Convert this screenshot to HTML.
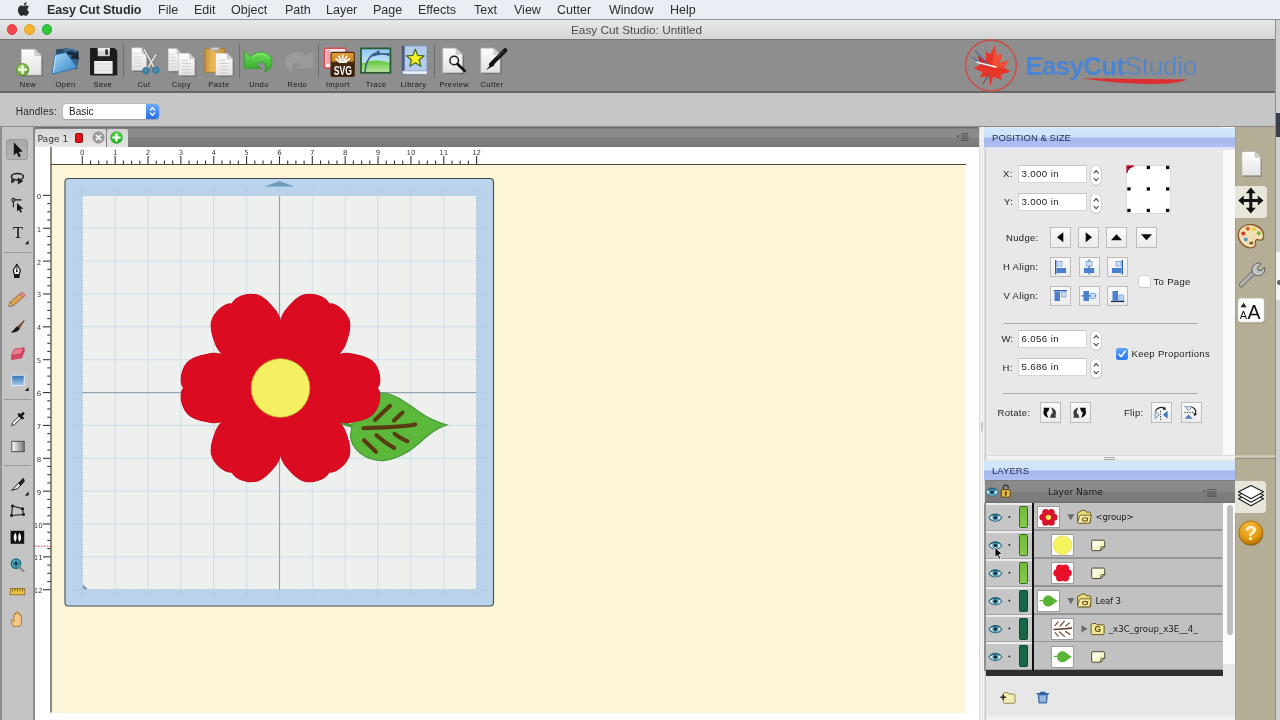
<!DOCTYPE html>
<html lang="en"><head><meta charset="utf-8"><title>Easy Cut Studio: Untitled</title>
<style>
*{box-sizing:border-box;margin:0;padding:0}
html,body{width:1280px;height:720px;overflow:hidden;background:#c9c9c9;font-family:"Liberation Sans","DejaVu Sans",sans-serif;color:#222}
div,span,svg{position:absolute}
svg{overflow:visible}
.dv{font-family:"DejaVu Sans","Liberation Sans",sans-serif}
#menubar{left:0;top:0;width:1280px;height:20px;background:#e9eef5;border-bottom:1px solid #8d939b;font-size:12.5px;color:#2b2d31}
#menubar span{top:1.800px;white-space:nowrap;line-height:17px}
#titlebar{left:0;top:20px;width:1275px;height:20px;background:linear-gradient(#e9e9e9,#d3d3d3);font-size:11.8px;color:#4a4a4a}
#toolbar{left:0;top:39px;width:1275px;height:54px;background:#8e8e8e;border-top:1px solid #757575;border-bottom:2px solid #666}
#optbar{left:0;top:93px;width:1275px;height:34px;background:#c6c6c6;border-bottom:1px solid #8a8a8a}
.tl{top:80.300px;font-size:7.500px;line-height:10px;color:#1a1a1a;text-align:center;width:50px;white-space:nowrap;letter-spacing:.42px}
.tsep{top:44px;width:1px;height:34px;background:#6e6e6e}
.pl{font-size:9.500px;line-height:14px;color:#202020;white-space:nowrap;letter-spacing:.32px}
.inp{width:69px;height:18.300px;background:#fff;border:1px solid #d6d6d6;border-top-color:#c4c4c4;font-size:9.700px;line-height:15.600px;color:#222;padding-left:2.300px;white-space:nowrap;letter-spacing:.38px}
.spin{width:10.400px;height:18.500px;border-radius:5.200px;background:#fff;box-shadow:0 0 0 .6px #c6c6c6,0 .6px 1.200px rgba(0,0,0,.25)}
.spin:before,.spin:after{content:"";position:absolute;left:3.500px;width:3.300px;height:3.300px;border:solid #3a3a3a;border-width:1.200px 0 0 1.200px}
.spin:before{top:5.200px;transform:rotate(45deg)}
.spin:after{top:9.800px;transform:rotate(225deg)}
.btn{width:21px;height:20.500px;background:linear-gradient(#fafafa,#ececec);border:1px solid #bdbdbd}
.lt{font-size:8.550px;line-height:12px;color:#1a1a1a;white-space:nowrap}
#app{left:0;top:0;width:1280px;height:720px;will-change:transform}

</style></head><body>
<div id="app">
<div id="menubar">
<svg style="left:18.200px;top:1.700px" width="12.100" height="14" viewBox="0 0 13 15"><path d="M9.2 0.2c.1 1-.3 1.8-.8 2.4-.6.7-1.400 1.100-2.200 1-.1-.9.300-1.800.8-2.300C7.600.6 8.500.2 9.200.2zM12 10.700c-.4.900-.6 1.300-1.100 2.100-.7 1.100-1.700 2.100-2.600 2.100-.9 0-1.100-.6-2.300-.6-1.200 0-1.500.6-2.300.6-1 0-1.800-1-2.500-2.100C-.300 10.500-.5 7.200.700 5.500c.8-1.200 2-1.800 3-1.800 1.100 0 1.800.6 2.700.6.900 0 1.400-.6 2.700-.6.900 0 2 .5 2.700 1.400-2.300 1.300-2 4.700.2 5.600z" fill="#2b2d31"/></svg>
<span style="left:47px;font-weight:bold;letter-spacing:-.1px">Easy Cut Studio</span>
<span style="left:158px">File</span>
<span style="left:194px">Edit</span>
<span style="left:231px">Object</span>
<span style="left:285px">Path</span>
<span style="left:326px">Layer</span>
<span style="left:373px">Page</span>
<span style="left:418px">Effects</span>
<span style="left:474px">Text</span>
<span style="left:514px">View</span>
<span style="left:557px">Cutter</span>
<span style="left:609px">Window</span>
<span style="left:670px">Help</span>
</div>
<div id="titlebar">
<div style="left:6.800px;top:4.200px;width:10.400px;height:10.400px;border-radius:6px;background:#f5454a;border:.6px solid #dc3a40"></div>
<div style="left:24.300px;top:4.200px;width:10.400px;height:10.400px;border-radius:6px;background:#f7b42e;border:.6px solid #dc9e2a"></div>
<div style="left:41.800px;top:4.200px;width:10.400px;height:10.400px;border-radius:6px;background:#30c83c;border:.6px solid #28ac34"></div>
<span style="left:571px;top:2.500px;white-space:nowrap;line-height:14px">Easy Cut Studio: Untitled</span>
</div>
<div id="toolbar"></div>
<div id="optbar">
<span style="left:15.800px;top:12px;font-size:10px;line-height:14px;color:#2a2a2a;letter-spacing:.2px">Handles:</span>
<div style="left:63px;top:11px;width:96px;height:15px;background:#fff;border-radius:3.5px;box-shadow:0 0 0 .5px #b2b2b2,0 1px 1px rgba(0,0,0,.25)"></div>
<div style="left:146px;top:11px;width:13px;height:15px;background:linear-gradient(#6aa9f7,#2570e8);border-radius:0 3.5px 3.5px 0"></div>
<svg style="left:146px;top:11px" width="13" height="15" viewBox="0 0 13 15"><path d="M4.300 6.100L6.500 3.800 8.700 6.100M4.300 8.900L6.500 11.200 8.700 8.900" fill="none" stroke="#fff" stroke-width="1.300" stroke-linecap="round" stroke-linejoin="round"/></svg>
<span style="left:69px;top:12px;font-size:10px;line-height:14px;color:#222">Basic</span>
</div>
<!-- toolbar labels -->
<span class="tl" style="left:3px">New</span>
<span class="tl" style="left:40.500px">Open</span>
<span class="tl" style="left:77.800px">Save</span>
<span class="tl" style="left:119px">Cut</span>
<span class="tl" style="left:156.300px">Copy</span>
<span class="tl" style="left:193.900px">Paste</span>
<span class="tl" style="left:234px">Undo</span>
<span class="tl" style="left:272.400px">Redo</span>
<span class="tl" style="left:312.900px">Import</span>
<span class="tl" style="left:351.200px">Trace</span>
<span class="tl" style="left:388.400px">Library</span>
<span class="tl" style="left:429.300px">Preview</span>
<span class="tl" style="left:467px">Cutter</span>
<div class="tsep" style="left:123px"></div>
<div class="tsep" style="left:239px"></div>
<div class="tsep" style="left:318px"></div>
<div class="tsep" style="left:434px"></div>
<svg style="left:0;top:0" width="1280" height="100" viewBox="0 0 1280 100">
<defs>
<linearGradient id="pg1" x1="0" y1="0" x2="0" y2="1"><stop offset="0" stop-color="#fdfdfd"/><stop offset="1" stop-color="#e2e2e2"/></linearGradient>
<radialGradient id="gplus" cx=".4" cy=".35" r=".7"><stop offset="0" stop-color="#b6e07a"/><stop offset="1" stop-color="#5a9a2a"/></radialGradient>
<linearGradient id="fold" x1="0" y1="0" x2="1" y2="1"><stop offset="0" stop-color="#a6d8f6"/><stop offset="1" stop-color="#2f83c8"/></linearGradient>
<linearGradient id="clip" x1="0" y1="0" x2="1" y2="0"><stop offset="0" stop-color="#c99236"/><stop offset=".4" stop-color="#eab95a"/><stop offset="1" stop-color="#c58d33"/></linearGradient>
<linearGradient id="und" x1="0" y1="0" x2="0" y2="1"><stop offset="0" stop-color="#6ee05a"/><stop offset="1" stop-color="#2fa62a"/></linearGradient>
<linearGradient id="sky" x1="0" y1="0" x2="0" y2="1"><stop offset="0" stop-color="#8cc6ee"/><stop offset="1" stop-color="#eaf6fc"/></linearGradient>
<linearGradient id="hill" x1="0" y1="0" x2="0" y2="1"><stop offset="0" stop-color="#5cc83a"/><stop offset="1" stop-color="#bfe6a6"/></linearGradient>
<linearGradient id="svgb" x1="0" y1="0" x2="0" y2="1"><stop offset="0" stop-color="#e9a03a"/><stop offset=".36" stop-color="#c9801f"/><stop offset=".42" stop-color="#4a2c10"/><stop offset="1" stop-color="#2e1a0a"/></linearGradient>
<g id="page"><path d="M.8 .8H13L19 6.800V25H.8z" fill="#3a3a3a" opacity=".35" transform="translate(1 1)"/><path d="M0 0H12.500L18.500 6V24.500H0z" fill="url(#pg1)" stroke="#b9b9b9" stroke-width=".6"/><path d="M12.500 0V6H18.500z" fill="#d2d2d2" stroke="#b0b0b0" stroke-width=".5"/></g>
<g id="lines" stroke="#c9c9c9" stroke-width=".8"><path d="M2.500 5H9M2.500 8H12M2.500 11H12M2.500 14H12M2.500 17H12"/></g>
</defs>
<!-- New -->
<use href="#page" transform="translate(21.300 49.300) scale(1.080 1.050)"/>
<circle cx="22.600" cy="69.700" r="6.200" fill="url(#gplus)" stroke="#4a8a22" stroke-width=".7"/>
<path d="M22.600 66.200V73.200M19.100 69.700H26.100" stroke="#f4fbe8" stroke-width="2.300" stroke-linecap="round"/>
<!-- Open -->
<path d="M56 49.500L67 48.200 79 57.500 76.500 69.500 56.500 61z" fill="#2a4a6a"/>
<path d="M62.500 49.800C68 47.600 75.500 48.300 79 53L76 66.500 68.500 59.500z" fill="#3a6a9a"/>
<path d="M66 52.500C69.500 50.500 73.500 50.800 75.500 53L78.200 50 78.800 59.500 69.300 58.500 72.500 55.700C71 54.500 68.500 54.500 67 55.500z" fill="#1a2a3a"/>
<path d="M52 74.200L54.500 56.500C54.700 55.300 55.300 54.700 56.500 54.500L66 52.500 77.500 67.700z" fill="url(#fold)" stroke="#2a6aa8" stroke-width=".8" stroke-linejoin="round"/>
<path d="M53.300 73L55.500 57" stroke="#d6eefc" stroke-width="1" opacity=".8"/>
<!-- Save -->
<path d="M90 49.200C90 48.500 90.500 48 91.200 48H114.500L117.300 50.800V74.300C117.300 75 116.800 75.500 116.100 75.500H91.200C90.500 75.500 90 75 90 74.300z" fill="#1c1c1c"/>
<rect x="94.200" y="61" width="18.400" height="12.800" fill="#eeeeee"/><path d="M94.200 64H112.600M94.200 67H112.600M94.200 70H112.600" stroke="#cfcfcf" stroke-width=".7"/>
<rect x="97.800" y="48" width="12" height="8.200" fill="#cfcfcf"/><rect x="97.800" y="48" width="12" height="3" fill="#ededed"/><rect x="105.300" y="49.300" width="2.600" height="5.600" rx=".8" fill="#2a2a2a"/>
<!-- Cut -->
<use href="#page" transform="translate(131.800 47.800) scale(.8 .93)"/><use href="#lines" transform="translate(131.800 48.500) scale(.8 1.050)"/>
<path d="M144.300 49.500L154.300 68M156 54.500L147.500 68.500" stroke="#6a6a6a" stroke-width="2.900" stroke-linecap="round"/>
<path d="M144.300 49.500L154.300 68M156 54.500L147.500 68.500" stroke="#e4e4e4" stroke-width="1.600" stroke-linecap="round"/>
<circle cx="146" cy="70.800" r="2.500" fill="#5f93b4" stroke="#3f7ea6" stroke-width="2.400"/><circle cx="155.800" cy="70.300" r="2.500" fill="#5f93b4" stroke="#3f7ea6" stroke-width="2.400"/>
<!-- Copy -->
<use href="#page" transform="translate(168.200 48.600) scale(.7 .915)"/><use href="#lines" transform="translate(168.200 49) scale(.7 1.050)"/>
<use href="#page" transform="translate(178.600 53.200) scale(.875 .905)"/><use href="#lines" transform="translate(179.600 55) scale(.95 1.050)"/>
<!-- Paste -->
<rect x="204.800" y="48.600" width="20.200" height="23.800" rx="1.200" fill="url(#clip)" stroke="#9a6a22" stroke-width=".6"/>
<rect x="210.500" y="47.300" width="9" height="3.300" rx="1" fill="#c9c9c9" stroke="#8a8a8a" stroke-width=".5"/>
<use href="#page" transform="translate(215.600 53.200) scale(.925 .905)"/><use href="#lines" transform="translate(216.800 55) scale(1 1.050)"/>
<!-- Undo -->
<path d="M244.600 51.500L251 56.500C257.500 50 268 50.500 271.300 58C273.500 64 270 70.500 264.500 72C266.500 68 266 63 261.800 62.300C259 62 257 63.500 256.500 65.500L262 68.300H244.600z" fill="url(#und)" stroke="#2a9a26" stroke-width=".7" stroke-linejoin="round"/>
<path d="M252 57.300C257.500 52.500 266 53 269 58.500" fill="none" stroke="#a6f08a" stroke-width="1" opacity=".7"/>
<!-- Redo -->
<path d="M312.800 51.500L306.400 56.500C299.900 50 289.400 50.500 286.100 58C283.900 64 287.400 70.500 292.900 72C290.900 68 291.400 63 295.600 62.300C298.400 62 300.400 63.500 300.900 65.500L295.400 68.300H312.800z" fill="#9d9d9d" stroke="#989898" stroke-width=".6" opacity=".9"/>
<!-- Import -->
<rect x="324.500" y="48.200" width="21.500" height="19.800" rx="1.200" fill="#fbeaea" stroke="#d84a55" stroke-width="1.600"/>
<rect x="326.300" y="50" width="4" height="14" fill="#f4a0a6"/>
<rect x="331" y="52.400" width="23.300" height="24" rx="1.500" fill="url(#svgb)" stroke="#4a2a0c" stroke-width="1.100"/>
<g stroke="#fff" stroke-width="1.700" stroke-linecap="round"><path d="M342.700 55.300V60M338.800 56.300L340.800 60.300M346.600 56.300L344.600 60.300M336 59L339.200 61.300M349.400 59L346.200 61.300"/></g>
<path d="M338 63C340 60.300 345.400 60.300 347.400 63z" fill="#fff"/>
<text x="333.800" y="74.600" font-family="Liberation Sans, sans-serif" font-weight="bold" font-size="12.600" fill="#fff" textLength="18.200" lengthAdjust="spacingAndGlyphs">SVG</text>
<!-- Trace -->
<rect x="361" y="48.400" width="29.400" height="24.400" fill="url(#sky)"/>
<path d="M361 63.500C370 59.500 382 59.500 390.400 63V72.800H361z" fill="url(#hill)"/>
<rect x="361" y="48.400" width="29.400" height="24.400" fill="none" stroke="#2a5c36" stroke-width="1.800"/>
<path d="M365 72C365.500 62 370 53.500 378.500 52.500M372 56C378 53.500 384 53.500 389 54.500" fill="none" stroke="#3d5f84" stroke-width="1.600"/>
<rect x="376.800" y="50.800" width="3" height="3" fill="#3d5f84"/><rect x="386.800" y="53" width="2.800" height="2.800" fill="#3d5f84"/>
<!-- Library -->
<rect x="401.700" y="45.800" width="25.300" height="28.400" rx="1" fill="#b5cbea" stroke="#7089b2" stroke-width=".8"/>
<rect x="401.700" y="45.800" width="3" height="28.400" fill="#4a5c80"/>
<path d="M402.500 70.800H427V73.800H402.500z" fill="#eef2f8"/><path d="M402.500 70.800H427" stroke="#7d93b8" stroke-width=".7"/>
<path d="M415.300 49.300L417.700 55.400 424.200 55.800 419.200 60 420.800 66.300 415.300 62.800 409.800 66.300 411.400 60 406.400 55.800 412.900 55.400z" fill="#f6ee1e" stroke="#3f6a2a" stroke-width="1.200" stroke-linejoin="round"/>
<!-- Preview -->
<use href="#page" transform="translate(442.800 48.200) scale(1.060 1)"/>
<circle cx="454.200" cy="60.500" r="4.300" fill="#f2f2f2" stroke="#1e1e1e" stroke-width="1.500"/>
<path d="M457.500 64L464.600 70.800" stroke="#141414" stroke-width="2.700" stroke-linecap="round"/>
<!-- Cutter -->
<use href="#page" transform="translate(480.800 48.200) scale(1.040 1)"/>
<path d="M505.200 50.300L491 64.500" stroke="#141414" stroke-width="4.200" stroke-linecap="round"/>
<path d="M492.800 62.200L486 70 494.600 65.300z" fill="#141414"/>
<path d="M503.500 51L497 57.500" stroke="#555" stroke-width="1" stroke-linecap="round"/>
<!-- Logo -->
<circle cx="991" cy="65.500" r="25.400" fill="none" stroke="#c9504a" stroke-width="1.600"/>
<g transform="translate(992 66) rotate(8)">
<path d="M0 -21L3.500 -11 8.500 -13.500 7 -4 16 -8 12.500 0 19 3 10 7.500 11.500 12.500 2.500 10.500 1 21 -1.500 10.500 -10.500 13 -8.500 7.500 -18 4.500 -11.500 0 -15.500 -8 -6.500 -4.500 -8 -13.500 -3.500 -11z" fill="#e8352a"/>
<path d="M0 -21L3.500 -11 8.500 -13.500 7 -4 16 -8 12.500 0 0 2z" fill="#f25a3a" opacity=".7"/>
<path d="M0 2L-11.500 0 -15.500 -8 -6.500 -4.500z" fill="#c8201a" opacity=".7"/>
</g>
<path d="M972 57L986 66M975 50.500L990 66.500" stroke="#5a6a9a" stroke-width="1.100"/><path d="M977 62.200L996 67" stroke="#f4f4f4" stroke-width="1.400" stroke-linecap="round"/>
<path d="M983 84L989 74" stroke="#7a3a3a" stroke-width="1"/>
<path d="M1081.500 78.300L1187 79.400C1180 82.600 1165 84.300 1145 83.900C1122 83.400 1100 81.400 1081.500 78.300z" fill="#de2f30"/>
</svg>
<span style="left:1025.500px;top:50px;font-size:26px;line-height:32px;font-weight:bold;color:#4a84d2;letter-spacing:-.75px;white-space:nowrap">EasyCut</span>
<svg style="left:0;top:0" width="1280" height="100" viewBox="0 0 1280 100"><text x="1124.600" y="75.400" font-family="Liberation Sans, sans-serif" font-size="26" fill="#4a84d2" stroke="#8e8e8e" stroke-width=".55" letter-spacing="-.2">Studio</text></svg>


<!-- document area -->
<div id="tabbar" style="left:35px;top:127px;width:944px;height:20px;background:linear-gradient(#6f6f6f 0,#747474 1px,#8b8b8b 2px,#8b8b8b 10px,#808080 11px,#7b7b7b 19px,#6a6a6a 20px)"></div>
<div style="left:35px;top:129px;width:70.500px;height:18px;background:linear-gradient(#d6d6d6,#dedede 50%,#e6e6e6);border-radius:2px 2px 0 0"></div>
<div style="left:107px;top:129px;width:20.500px;height:18px;background:linear-gradient(#d2d2d2,#dcdcdc 50%,#e2e2e2);border-radius:2px 2px 0 0"></div>
<span class="dv" style="left:37.500px;top:131.500px;font-size:9.200px;line-height:13px;color:#383838;white-space:nowrap;letter-spacing:-.05px">Page 1</span>
<div style="left:74.500px;top:133px;width:8px;height:10px;background:#e0101a;border:1px solid #8c1212;border-radius:1.500px"></div>
<svg style="left:91.600px;top:131.400px" width="13" height="13" viewBox="0 0 13 13"><circle cx="6.500" cy="6.500" r="5.700" fill="#9b9b9b" stroke="#8a8a8a" stroke-width=".6"/><path d="M4.300 4.300L8.700 8.700M8.700 4.300L4.300 8.700" stroke="#f4f4f4" stroke-width="1.700" stroke-linecap="round"/></svg>
<svg style="left:110.400px;top:131.400px" width="13" height="13" viewBox="0 0 13 13"><defs><radialGradient id="gp" cx=".5" cy=".35" r=".7"><stop offset="0" stop-color="#5fe052"/><stop offset="1" stop-color="#18a31c"/></radialGradient></defs><circle cx="6.500" cy="6.500" r="6.200" fill="url(#gp)"/><path d="M6.500 3.200V9.800M3.200 6.500H9.800" stroke="#fff" stroke-width="2.100" stroke-linecap="round"/></svg>
<svg style="left:958px;top:133px" width="12" height="9" viewBox="0 0 12 9"><path d="M-1.500 2.500h3L0 4.500z" fill="#3c3c3c"/><path d="M3 .8h7.500M3 3h7.500M3 5.200h7.500M3 7.400h7.500" stroke="#4a4a4a" stroke-width=".9"/></svg>
<!-- ruler backgrounds -->
<div style="left:35px;top:147px;width:944px;height:573px;background:#fff"></div>
<div id="canvasbg" style="left:52px;top:165px;width:914px;height:547.500px;background:#fcf5d7"></div>
<svg style="left:0;top:0" width="1280" height="720" viewBox="0 0 1280 720">
<g stroke="#3a382e" stroke-width="1.100"><line x1="82.3" y1="156" x2="82.3" y2="164.5"/><line x1="90.52" y1="160.4" x2="90.52" y2="164.5"/><line x1="98.73" y1="160.4" x2="98.73" y2="164.5"/><line x1="106.94" y1="160.4" x2="106.94" y2="164.5"/><line x1="115.16" y1="156" x2="115.16" y2="164.5"/><line x1="123.38" y1="160.4" x2="123.38" y2="164.5"/><line x1="131.59" y1="160.4" x2="131.59" y2="164.5"/><line x1="139.81" y1="160.4" x2="139.81" y2="164.5"/><line x1="148.02" y1="156" x2="148.02" y2="164.5"/><line x1="156.24" y1="160.4" x2="156.24" y2="164.5"/><line x1="164.45" y1="160.4" x2="164.45" y2="164.5"/><line x1="172.66" y1="160.4" x2="172.66" y2="164.5"/><line x1="180.88" y1="156" x2="180.88" y2="164.5"/><line x1="189.09" y1="160.4" x2="189.09" y2="164.5"/><line x1="197.31" y1="160.4" x2="197.31" y2="164.5"/><line x1="205.52" y1="160.4" x2="205.52" y2="164.5"/><line x1="213.74" y1="156" x2="213.74" y2="164.5"/><line x1="221.95" y1="160.4" x2="221.95" y2="164.5"/><line x1="230.17" y1="160.4" x2="230.17" y2="164.5"/><line x1="238.38" y1="160.4" x2="238.38" y2="164.5"/><line x1="246.6" y1="156" x2="246.6" y2="164.5"/><line x1="254.81" y1="160.4" x2="254.81" y2="164.5"/><line x1="263.03" y1="160.4" x2="263.03" y2="164.5"/><line x1="271.25" y1="160.4" x2="271.25" y2="164.5"/><line x1="279.46" y1="156" x2="279.46" y2="164.5"/><line x1="287.68" y1="160.4" x2="287.68" y2="164.5"/><line x1="295.89" y1="160.4" x2="295.89" y2="164.5"/><line x1="304.11" y1="160.4" x2="304.11" y2="164.5"/><line x1="312.32" y1="156" x2="312.32" y2="164.5"/><line x1="320.53" y1="160.4" x2="320.53" y2="164.5"/><line x1="328.75" y1="160.4" x2="328.75" y2="164.5"/><line x1="336.96" y1="160.4" x2="336.96" y2="164.5"/><line x1="345.18" y1="156" x2="345.18" y2="164.5"/><line x1="353.39" y1="160.4" x2="353.39" y2="164.5"/><line x1="361.61" y1="160.4" x2="361.61" y2="164.5"/><line x1="369.82" y1="160.4" x2="369.82" y2="164.5"/><line x1="378.04" y1="156" x2="378.04" y2="164.5"/><line x1="386.25" y1="160.4" x2="386.25" y2="164.5"/><line x1="394.47" y1="160.4" x2="394.47" y2="164.5"/><line x1="402.69" y1="160.4" x2="402.69" y2="164.5"/><line x1="410.9" y1="156" x2="410.9" y2="164.5"/><line x1="419.12" y1="160.4" x2="419.12" y2="164.5"/><line x1="427.33" y1="160.4" x2="427.33" y2="164.5"/><line x1="435.55" y1="160.4" x2="435.55" y2="164.5"/><line x1="443.76" y1="156" x2="443.76" y2="164.5"/><line x1="451.98" y1="160.4" x2="451.98" y2="164.5"/><line x1="460.19" y1="160.4" x2="460.19" y2="164.5"/><line x1="468.41" y1="160.4" x2="468.41" y2="164.5"/><line x1="476.62" y1="156" x2="476.62" y2="164.5"/><line x1="43" y1="195.4" x2="51" y2="195.4"/><line x1="47.3" y1="203.62" x2="51" y2="203.62"/><line x1="47.3" y1="211.83" x2="51" y2="211.83"/><line x1="47.3" y1="220.05" x2="51" y2="220.05"/><line x1="43" y1="228.26" x2="51" y2="228.26"/><line x1="47.3" y1="236.48" x2="51" y2="236.48"/><line x1="47.3" y1="244.69" x2="51" y2="244.69"/><line x1="47.3" y1="252.91" x2="51" y2="252.91"/><line x1="43" y1="261.12" x2="51" y2="261.12"/><line x1="47.3" y1="269.34" x2="51" y2="269.34"/><line x1="47.3" y1="277.55" x2="51" y2="277.55"/><line x1="47.3" y1="285.76" x2="51" y2="285.76"/><line x1="43" y1="293.98" x2="51" y2="293.98"/><line x1="47.3" y1="302.19" x2="51" y2="302.19"/><line x1="47.3" y1="310.41" x2="51" y2="310.41"/><line x1="47.3" y1="318.62" x2="51" y2="318.62"/><line x1="43" y1="326.84" x2="51" y2="326.84"/><line x1="47.3" y1="335.06" x2="51" y2="335.06"/><line x1="47.3" y1="343.27" x2="51" y2="343.27"/><line x1="47.3" y1="351.49" x2="51" y2="351.49"/><line x1="43" y1="359.7" x2="51" y2="359.7"/><line x1="47.3" y1="367.91" x2="51" y2="367.91"/><line x1="47.3" y1="376.13" x2="51" y2="376.13"/><line x1="47.3" y1="384.35" x2="51" y2="384.35"/><line x1="43" y1="392.56" x2="51" y2="392.56"/><line x1="47.3" y1="400.77" x2="51" y2="400.77"/><line x1="47.3" y1="408.99" x2="51" y2="408.99"/><line x1="47.3" y1="417.21" x2="51" y2="417.21"/><line x1="43" y1="425.42" x2="51" y2="425.42"/><line x1="47.3" y1="433.63" x2="51" y2="433.63"/><line x1="47.3" y1="441.85" x2="51" y2="441.85"/><line x1="47.3" y1="450.06" x2="51" y2="450.06"/><line x1="43" y1="458.28" x2="51" y2="458.28"/><line x1="47.3" y1="466.5" x2="51" y2="466.5"/><line x1="47.3" y1="474.71" x2="51" y2="474.71"/><line x1="47.3" y1="482.92" x2="51" y2="482.92"/><line x1="43" y1="491.14" x2="51" y2="491.14"/><line x1="47.3" y1="499.36" x2="51" y2="499.36"/><line x1="47.3" y1="507.57" x2="51" y2="507.57"/><line x1="47.3" y1="515.78" x2="51" y2="515.78"/><line x1="43" y1="524" x2="51" y2="524"/><line x1="47.3" y1="532.22" x2="51" y2="532.22"/><line x1="47.3" y1="540.43" x2="51" y2="540.43"/><line x1="47.3" y1="548.64" x2="51" y2="548.64"/><line x1="43" y1="556.86" x2="51" y2="556.86"/><line x1="47.3" y1="565.08" x2="51" y2="565.08"/><line x1="47.3" y1="573.29" x2="51" y2="573.29"/><line x1="47.3" y1="581.5" x2="51" y2="581.5"/><line x1="43" y1="589.72" x2="51" y2="589.72"/></g>
<path d="M51 147V712.500" stroke="#6e6c5e" stroke-width="1.600" fill="none"/>
<path d="M51 164.500H966" stroke="#4a4838" stroke-width="1.200" fill="none"/>
<g font-family="DejaVu Sans, Liberation Sans, sans-serif" font-size="7" fill="#3c3c3c" text-anchor="middle"><text x="82.3" y="154.600">0</text><text x="115.16" y="154.600">1</text><text x="148.02" y="154.600">2</text><text x="180.88" y="154.600">3</text><text x="213.74" y="154.600">4</text><text x="246.6" y="154.600">5</text><text x="279.46" y="154.600">6</text><text x="312.32" y="154.600">7</text><text x="345.18" y="154.600">8</text><text x="378.04" y="154.600">9</text><text x="410.9" y="154.600">10</text><text x="443.76" y="154.600">11</text><text x="476.62" y="154.600">12</text></g>
<g font-family="DejaVu Sans, Liberation Sans, sans-serif" font-size="7" fill="#3c3c3c"><text x="41.2" y="198.9" text-anchor="end">0</text><text x="41.2" y="231.76" text-anchor="end">1</text><text x="41.2" y="264.62" text-anchor="end">2</text><text x="41.2" y="297.48" text-anchor="end">3</text><text x="41.2" y="330.34" text-anchor="end">4</text><text x="41.2" y="363.2" text-anchor="end">5</text><text x="41.2" y="396.06" text-anchor="end">6</text><text x="41.2" y="428.92" text-anchor="end">7</text><text x="41.2" y="461.78" text-anchor="end">8</text><text x="41.2" y="494.64" text-anchor="end">9</text><text x="42.6" y="527.5" text-anchor="end">10</text><text x="42.6" y="560.36" text-anchor="end">11</text><text x="42.6" y="593.22" text-anchor="end">12</text></g>
<!-- mat -->
<rect x="65" y="178.500" width="428.500" height="427.500" rx="3.500" fill="#b9d4ea" stroke="#434c55" stroke-width="1.100"/>
<rect x="82.300" y="195.400" width="394.300" height="394.300" fill="#eef0ee"/>
<g stroke="#c6dbea" stroke-width=".85"><line x1="115.16" y1="195.4" x2="115.16" y2="589.72"/><line x1="82.3" y1="228.26" x2="476.62" y2="228.26"/><line x1="148.02" y1="195.4" x2="148.02" y2="589.72"/><line x1="82.3" y1="261.12" x2="476.62" y2="261.12"/><line x1="180.88" y1="195.4" x2="180.88" y2="589.72"/><line x1="82.3" y1="293.98" x2="476.62" y2="293.98"/><line x1="213.74" y1="195.4" x2="213.74" y2="589.72"/><line x1="82.3" y1="326.84" x2="476.62" y2="326.84"/><line x1="246.6" y1="195.4" x2="246.6" y2="589.72"/><line x1="82.3" y1="359.7" x2="476.62" y2="359.7"/><line x1="312.32" y1="195.4" x2="312.32" y2="589.72"/><line x1="82.3" y1="425.42" x2="476.62" y2="425.42"/><line x1="345.18" y1="195.4" x2="345.18" y2="589.72"/><line x1="82.3" y1="458.28" x2="476.62" y2="458.28"/><line x1="378.04" y1="195.4" x2="378.04" y2="589.72"/><line x1="82.3" y1="491.14" x2="476.62" y2="491.14"/><line x1="410.9" y1="195.4" x2="410.9" y2="589.72"/><line x1="82.3" y1="524" x2="476.62" y2="524"/><line x1="443.76" y1="195.4" x2="443.76" y2="589.72"/><line x1="82.3" y1="556.86" x2="476.62" y2="556.86"/></g>
<path d="M279.500 195.400V589.700M82.300 392.600H476.600" stroke="#8fa3b2" stroke-width="1.150" fill="none"/>
<rect x="82.300" y="195.400" width="394.300" height="394.300" fill="none" stroke="#9db8cf" stroke-width=".9" stroke-dasharray="1.500 1.500"/>
<path d="M264.500 186.400L279.500 181.200 294.500 186.400z" fill="#6c9abd"/>
<path d="M82.800 584.200V589.200H87.800z" fill="#6f9cc0"/><g fill="#a3c0da"><rect x="81.8" y="189.300" width="1" height="1.800"/><rect x="81.8" y="592.600" width="1" height="1.800"/><rect x="75.300" y="194.9" width="1.800" height="1"/><rect x="482.800" y="194.9" width="1.800" height="1"/><rect x="114.66" y="189.300" width="1" height="1.800"/><rect x="114.66" y="592.600" width="1" height="1.800"/><rect x="75.300" y="227.76" width="1.800" height="1"/><rect x="482.800" y="227.76" width="1.800" height="1"/><rect x="147.52" y="189.300" width="1" height="1.800"/><rect x="147.52" y="592.600" width="1" height="1.800"/><rect x="75.300" y="260.62" width="1.800" height="1"/><rect x="482.800" y="260.62" width="1.800" height="1"/><rect x="180.38" y="189.300" width="1" height="1.800"/><rect x="180.38" y="592.600" width="1" height="1.800"/><rect x="75.300" y="293.48" width="1.800" height="1"/><rect x="482.800" y="293.48" width="1.800" height="1"/><rect x="213.24" y="189.300" width="1" height="1.800"/><rect x="213.24" y="592.600" width="1" height="1.800"/><rect x="75.300" y="326.34" width="1.800" height="1"/><rect x="482.800" y="326.34" width="1.800" height="1"/><rect x="246.1" y="189.300" width="1" height="1.800"/><rect x="246.1" y="592.600" width="1" height="1.800"/><rect x="75.300" y="359.2" width="1.800" height="1"/><rect x="482.800" y="359.2" width="1.800" height="1"/><rect x="278.96" y="189.300" width="1" height="1.800"/><rect x="278.96" y="592.600" width="1" height="1.800"/><rect x="75.300" y="392.06" width="1.800" height="1"/><rect x="482.800" y="392.06" width="1.800" height="1"/><rect x="311.82" y="189.300" width="1" height="1.800"/><rect x="311.82" y="592.600" width="1" height="1.800"/><rect x="75.300" y="424.92" width="1.800" height="1"/><rect x="482.800" y="424.92" width="1.800" height="1"/><rect x="344.68" y="189.300" width="1" height="1.800"/><rect x="344.68" y="592.600" width="1" height="1.800"/><rect x="75.300" y="457.78" width="1.800" height="1"/><rect x="482.800" y="457.78" width="1.800" height="1"/><rect x="377.54" y="189.300" width="1" height="1.800"/><rect x="377.54" y="592.600" width="1" height="1.800"/><rect x="75.300" y="490.64" width="1.800" height="1"/><rect x="482.800" y="490.64" width="1.800" height="1"/><rect x="410.4" y="189.300" width="1" height="1.800"/><rect x="410.4" y="592.600" width="1" height="1.800"/><rect x="75.300" y="523.5" width="1.800" height="1"/><rect x="482.800" y="523.5" width="1.800" height="1"/><rect x="443.26" y="189.300" width="1" height="1.800"/><rect x="443.26" y="592.600" width="1" height="1.800"/><rect x="75.300" y="556.36" width="1.800" height="1"/><rect x="482.800" y="556.36" width="1.800" height="1"/><rect x="476.12" y="189.300" width="1" height="1.800"/><rect x="476.12" y="592.600" width="1" height="1.800"/><rect x="75.300" y="589.22" width="1.800" height="1"/><rect x="482.800" y="589.22" width="1.800" height="1"/></g>
<!-- leaf -->
<g id="leaf">
<path d="M337.500 421.200C342 423 347 424.500 353 426.500" stroke="#4a9a32" stroke-width="3.400" fill="none"/>
<path d="M351.700 428C351.500 412 362 394.500 381 393C396 392.500 411 407 423 414.500C431 419.500 440 423 447 425C440 427 434 430.500 428 435.500C418 444 406 457.500 384 460.600C366 461.500 351 449 350.500 435.500z" fill="#5cb83a" stroke="#47973a" stroke-width="1.200"/>
<g fill="none" stroke="#5b3b12" stroke-width="4.100" stroke-linecap="round">
<path d="M363.500 428.200C378 427.500 386 427.500 394 426.800C402 426.200 408 425.800 415.200 424.400"/>
<path d="M375 420L390 405.800"/><path d="M394 420.500L402.500 412.600"/>
<path d="M364 440.200L376 451.800"/><path d="M376.400 435.200C383 441 388 444.500 394.200 448"/><path d="M394.600 433.800C399 437 403 439.500 407.400 441.200"/>
</g>
</g>
<!-- flower -->
<g id="flower" transform="translate(280.500 388)">
<defs><path id="pt" d="M30 -26L57.200 -33C62 -34.800 68 -35 73 -33.800C80 -32.600 88 -30.500 92.500 -26C97 -21.500 100 -13 99.300 -6.500C99 -3.500 98 -1.200 96.900 0C98 1.200 99 3.500 99.300 6.500C100 13 97 21.500 92.500 26C88 30.500 80 32.600 73 33.800C68 35 62 34.800 57.200 33L30 26z"/></defs>
<g fill="#db0b22" stroke="#bf0e24" stroke-width="1.100">
<use href="#pt"/><use href="#pt" transform="rotate(60)"/><use href="#pt" transform="rotate(120)"/><use href="#pt" transform="rotate(180)"/><use href="#pt" transform="rotate(240)"/><use href="#pt" transform="rotate(300)"/>
</g>
<g fill="#db0b22">
<circle r="64"/>
<use href="#pt"/><use href="#pt" transform="rotate(60)"/><use href="#pt" transform="rotate(120)"/><use href="#pt" transform="rotate(180)"/><use href="#pt" transform="rotate(240)"/><use href="#pt" transform="rotate(300)"/>
</g>
<circle r="29.300" fill="#f4f062" stroke="#c9a92c" stroke-width=".8"/>
</g>
</svg>

<!-- left toolbox -->
<div style="left:0;top:127px;width:35px;height:593px;background:#c4c4c4;border-left:2px solid #8f8f8f;border-right:2px solid #8c8c8c"></div>
<div style="left:6.300px;top:138.500px;width:22.200px;height:21.800px;border-radius:3px;background:linear-gradient(#a9a9a9,#b3b3b3);border:1px solid #999"></div>
<div style="left:4px;top:252px;width:27px;height:1px;background:#9a9a9a"></div>
<div style="left:4px;top:399px;width:27px;height:1px;background:#9a9a9a"></div>
<div style="left:4px;top:464.500px;width:27px;height:1px;background:#9a9a9a"></div>
<svg style="left:0;top:0" width="36" height="720" viewBox="0 0 36 720">
<!-- arrow -->
<path d="M13.800 142.300V155.400L16.600 152.800 18.700 157.300 20.800 156.300 18.800 152 22.600 151.600z" fill="#161616"/>
<!-- lasso -->
<g fill="none" stroke="#1e1e1e" stroke-width="1.500"><ellipse cx="17.400" cy="176.700" rx="6" ry="3.200"/></g>
<path d="M11.300 178.500L15.200 181 11.300 183.500zM17.800 177.500L23.400 181 17.800 184.500z" fill="#1e1e1e"/>
<!-- node tool -->
<g fill="none" stroke="#1e1e1e" stroke-width="1.100"><circle cx="13.400" cy="199.900" r="1.500"/><path d="M15 199.900H21.500M13.400 201.500V207.200"/></g>
<path d="M17 203V211.500L19 209.700 20.500 212.800 22 212.100 20.500 209 23.300 208.700z" fill="#161616"/>
<!-- T -->
<text x="18" y="238" font-family="Liberation Serif, DejaVu Serif, serif" font-size="16.500" text-anchor="middle" fill="#111">T</text>
<path d="M28.600 240.500V244.300H24.800z" fill="#161616"/>
<!-- pen nib -->
<path d="M16.800 264.300L20.300 270.200 19.300 274.500H14.300L13.300 270.200z" fill="#fff" stroke="#161616" stroke-width="1.200" stroke-linejoin="round"/>
<path d="M16.800 265V271" stroke="#161616" stroke-width=".9"/><circle cx="16.800" cy="271.300" r="1" fill="#161616"/>
<rect x="14" y="275" width="5.600" height="3" fill="#161616"/>
<!-- pencil -->
<g transform="rotate(-40 17.500 299)"><rect x="9.500" y="296.600" width="13" height="4.800" fill="#dca24e" stroke="#8a5a22" stroke-width=".7"/><path d="M9.500 296.600L6.200 299 9.500 301.400z" fill="#e9cfa0" stroke="#8a5a22" stroke-width=".6"/><path d="M7.300 298.200L6.200 299 7.300 299.800z" fill="#333"/><rect x="22.500" y="296.600" width="3.300" height="4.800" rx="1" fill="#e98a9a" stroke="#a04a5a" stroke-width=".6"/></g>
<!-- brush -->
<path d="M24.300 320.300L17.500 326.800 19.300 328.400z" fill="#8a5a3a" stroke="#5a3a22" stroke-width=".8" stroke-linejoin="round"/>
<path d="M17.200 326.300C14.500 328 13.500 331 10.800 332.300C14.500 333 18.500 331.500 19.800 328.700z" fill="#161616"/>
<!-- eraser -->
<path d="M14.300 349.200L24 347.800 21.300 354 11.500 355.800z" fill="#f07a90" stroke="#c23a5a" stroke-width=".8" stroke-linejoin="round"/>
<path d="M11.500 355.800L21.300 354 24 347.800 24.200 351.400 21.500 358 11.700 359.600z" fill="#d84a68" stroke="#c23a5a" stroke-width=".8" stroke-linejoin="round"/>
<!-- rectangle -->
<defs><linearGradient id="gr1" x1="0" y1="0" x2="0" y2="1"><stop offset="0" stop-color="#2e6fb0"/><stop offset="1" stop-color="#a8cdec"/></linearGradient>
<linearGradient id="gr2" x1="0" y1="0" x2="1" y2="0"><stop offset="0" stop-color="#fff"/><stop offset="1" stop-color="#777"/></linearGradient></defs>
<rect x="11.600" y="375.200" width="12.600" height="10.400" fill="url(#gr1)" stroke="#dfe9f2" stroke-width="1"/>
<path d="M28.600 387.300V391.100H24.800z" fill="#161616"/>
<!-- eyedropper -->
<path d="M11.600 425.600L12.600 422.600 19.600 415.600 21.600 417.600 14.600 424.600z" fill="#f4f4f4" stroke="#222" stroke-width=".9" stroke-linejoin="round"/>
<path d="M19 414.500L22.600 418.100M20.300 416.300L23.200 413.400" stroke="#161616" stroke-width="2.600" stroke-linecap="round"/>
<!-- gradient -->
<rect x="11.800" y="441.300" width="12.400" height="10.400" fill="url(#gr2)" stroke="#444" stroke-width=".9"/>
<!-- knife -->
<path d="M11.500 490.300L23.300 478.300 24.300 481.300 17.500 488.800z" fill="#e8e8e8" stroke="#1e1e1e" stroke-width="1" stroke-linejoin="round"/>
<path d="M18.300 483.300L23.300 478.300 24.300 481.300 20.300 485.800z" fill="#1e1e1e"/>
<path d="M28.600 491.600V495.400H24.800z" fill="#161616"/>
<!-- distort -->
<path d="M12.500 506L22.500 508.800 23.500 514.500 11.500 515.500z" fill="none" stroke="#1e1e1e" stroke-width="1.100"/>
<g fill="#161616"><rect x="11.200" y="504.700" width="2.600" height="2.600"/><rect x="21.200" y="507.500" width="2.600" height="2.600"/><rect x="22.200" y="513.200" width="2.600" height="2.600"/><rect x="10.200" y="514.200" width="2.600" height="2.600"/></g>
<!-- warp -->
<rect x="10.600" y="530.800" width="13.600" height="13" fill="#111"/>
<path d="M15.500 532.800C13 536 13 539 15.500 542C17 539 17 536 15.500 532.800zM19.300 532.800C21.800 536 21.800 539 19.300 542C17.800 539 17.800 536 19.300 532.800z" fill="#fff"/>
<!-- zoom -->
<circle cx="16" cy="563.600" r="4.700" fill="#4aa6b8" stroke="#1e6a80" stroke-width="1.300"/>
<path d="M16 561V566.200M13.400 563.600H18.600" stroke="#0e3a50" stroke-width="1.500"/>
<path d="M19.600 567.300L23.300 571" stroke="#8a8a8a" stroke-width="2.200" stroke-linecap="round"/>
<!-- ruler -->
<rect x="10.200" y="588.600" width="14.600" height="6.200" fill="#e8c04a" stroke="#8a6a1a" stroke-width=".8"/>
<path d="M12.500 588.600V591.500M15 588.600V591M17.500 588.600V591.500M20 588.600V591M22.500 588.600V591.500" stroke="#6a4a0a" stroke-width=".8"/>
<!-- hand -->
<path d="M13.300 626.300C11.500 623 10.500 620.500 11.300 619.800C12.300 619.200 13.300 620.500 14 622V614.500C14 613.300 15.800 613.300 15.800 614.500V612.800C15.800 611.500 17.700 611.500 17.700 612.800V613.600C17.700 612.400 19.600 612.400 19.600 613.600V615.400C19.600 614.300 21.400 614.300 21.400 615.400V622.300C21.400 624 20.800 625.300 20 626.300z" fill="#f6c88a" stroke="#a8702a" stroke-width=".9" stroke-linejoin="round"/>
<!-- ruler cursor marker -->
<path d="M35 546.200H51" stroke="#d0303a" stroke-width="1" stroke-dasharray="1.500 1.500"/>
</svg>

<!-- splitter + right panel -->
<div style="left:979px;top:127px;width:6px;height:593px;background:#efefef;border-left:1.200px solid #dadada"></div>

<div style="left:980.500px;top:422px;width:2.800px;height:9.500px;background:#c9c9c9;border-radius:1px"></div>
<div style="left:984px;top:127px;width:1px;height:593px;background:#dddddd"></div>
<div id="pbody" style="left:985.500px;top:127px;width:237px;height:328px;background:#e8e8e8"></div>
<div style="left:1222.500px;top:127px;width:13.500px;height:328px;background:#fafafa"></div>
<div id="phead" style="left:984.400px;top:128px;width:251.600px;height:19px;background:linear-gradient(#d2e6fb 0,#cfe3fa 9px,#a7b8ee 10px,#aebff0 19px)"></div>
<div style="left:985px;top:147px;width:251px;height:2.500px;background:linear-gradient(#d8e2f6,#ececf0)"></div>
<span style="left:992px;top:131px;font-size:9.500px;line-height:13px;color:#1c2a55;white-space:nowrap;letter-spacing:.05px">POSITION &amp; SIZE</span>
<!-- X/Y -->
<span class="pl" style="left:1003px;top:167px">X:</span>
<span class="pl" style="left:1004px;top:195px">Y:</span>
<div class="inp" style="left:1018.200px;top:165.200px">3.000 in</div>
<div class="inp" style="left:1018.200px;top:193.200px">3.000 in</div>
<div class="spin" style="left:1090.500px;top:166px"></div>
<div class="spin" style="left:1090.500px;top:194px"></div>
<!-- anchor box -->
<div style="left:1125.500px;top:164.500px;width:45.500px;height:49px;background:#fff;border:1px solid #d9d9d9"></div>
<svg style="left:1125px;top:164px" width="47" height="50" viewBox="0 0 47 50"><path d="M1.300 1.200H8.800V3.300H4.500L3 4.800V8.800H1.300z" fill="#c2183a"/><path d="M3 2.800H6.500V4.200H4.500V6H3z" fill="#7a0a22"/>
<g fill="#0a0a0a"><rect x="21.700" y="1.800" width="3.300" height="3.300"/><rect x="41" y="1.800" width="3.300" height="3.300"/><rect x="2.300" y="23.300" width="3.300" height="3.300"/><rect x="21.700" y="23.300" width="3.300" height="3.300"/><rect x="41" y="23.300" width="3.300" height="3.300"/><rect x="2.300" y="44.800" width="3.300" height="3.300"/><rect x="21.700" y="44.800" width="3.300" height="3.300"/><rect x="41" y="44.800" width="3.300" height="3.300"/></g></svg>
<!-- nudge -->
<span class="pl" style="left:1006px;top:230.500px">Nudge:</span>
<div class="btn" style="left:1049.500px;top:227px"></div>
<div class="btn" style="left:1077.500px;top:227px"></div>
<div class="btn" style="left:1106px;top:227px"></div>
<div class="btn" style="left:1136px;top:227px"></div>
<svg style="left:0;top:0" width="1280" height="720" viewBox="0 0 1280 720"><g fill="#0c0c0c"><path d="M1057 237.300L1063.300 232.300V242.300z"/><path d="M1092 237.300L1085.700 232.300V242.300z"/><path d="M1116.500 234.300L1122 240.300H1111z"/><path d="M1146.500 240.300L1152 234.300H1141z"/></g></svg>
<span class="pl" style="left:1003px;top:260px">H Align:</span>
<div class="btn" style="left:1049.500px;top:256.500px"></div>
<div class="btn" style="left:1078.500px;top:256.500px"></div>
<div class="btn" style="left:1107px;top:256.500px"></div>
<span class="pl" style="left:1003.500px;top:289px">V Align:</span>
<div class="btn" style="left:1049.500px;top:285.500px"></div>
<div class="btn" style="left:1078.500px;top:285.500px"></div>
<div class="btn" style="left:1107px;top:285.500px"></div>
<svg style="left:0;top:0" width="1280" height="720" viewBox="0 0 1280 720">
<g fill="#4a7fd0" stroke="none">
<!-- H align left -->
<rect x="1055" y="260" width="1.300" height="14.500" fill="#2a5fb8"/><rect x="1057" y="261.500" width="5" height="4.500" fill="#cfe0f6" stroke="#5a8ad8" stroke-width=".6"/><rect x="1056.500" y="268" width="9.500" height="5"/>
<!-- H align center -->
<rect x="1088.500" y="259.500" width="1.200" height="15" fill="#2a5fb8"/><rect x="1086.200" y="261.500" width="5.800" height="4.500" fill="#cfe0f6" stroke="#5a8ad8" stroke-width=".6"/><rect x="1084" y="268" width="10.200" height="5"/>
<!-- H align right -->
<rect x="1121.700" y="260" width="1.300" height="14.500" fill="#2a5fb8"/><rect x="1116" y="261.500" width="5" height="4.500" fill="#cfe0f6" stroke="#5a8ad8" stroke-width=".6"/><rect x="1112" y="268" width="9.500" height="5"/>
<!-- V align top -->
<rect x="1053.500" y="290" width="13.500" height="1.300" fill="#2a5fb8"/><rect x="1054.500" y="291.500" width="5.500" height="9.500"/><rect x="1061.500" y="292" width="4.500" height="5" fill="#cfe0f6" stroke="#5a8ad8" stroke-width=".6"/>
<!-- V align mid -->
<rect x="1081.500" y="295.300" width="15" height="1.200" fill="#2a5fb8"/><rect x="1083.500" y="291" width="5.500" height="10"/><rect x="1090.500" y="293.300" width="4.500" height="5.400" fill="#cfe0f6" stroke="#5a8ad8" stroke-width=".6"/>
<!-- V align bottom -->
<rect x="1111" y="300.800" width="13.500" height="1.300" fill="#1a2a48"/><rect x="1112.500" y="291" width="5.500" height="9.800"/><rect x="1119" y="295" width="4.500" height="5.500" fill="#bcd2f2" stroke="#5a8ad8" stroke-width=".6"/>
</g></svg>
<div style="left:1138.500px;top:275.500px;width:11.500px;height:11.500px;background:#fff;border-radius:2.500px;box-shadow:0 0 0 .6px #c2c2c2,0 .5px 1px rgba(0,0,0,.15)"></div>
<span class="pl" style="left:1153.500px;top:275px">To Page</span>
<div style="left:1003.500px;top:322.500px;width:194.500px;height:1.200px;background:#a9a9a9"></div>
<!-- W/H -->
<span class="pl" style="left:1001.500px;top:332px">W:</span>
<span class="pl" style="left:1002.500px;top:360.500px">H:</span>
<div class="inp" style="left:1018.200px;top:330.200px">6.056 in</div>
<div class="inp" style="left:1018.200px;top:358.200px">5.686 in</div>
<div class="spin" style="left:1090.500px;top:331px"></div>
<div class="spin" style="left:1090.500px;top:359px"></div>
<div style="left:1116px;top:347.500px;width:12px;height:12px;border-radius:2.500px;background:linear-gradient(#5ea4f6,#2b79ec)"></div>
<svg style="left:1116px;top:347.500px" width="12" height="12" viewBox="0 0 12 12"><path d="M3 6.300L5.100 8.600 9.100 3.300" fill="none" stroke="#fff" stroke-width="1.500" stroke-linecap="round" stroke-linejoin="round"/></svg>
<span class="pl" style="left:1131.500px;top:347px">Keep Proportions</span>
<div style="left:1003px;top:393.200px;width:194.500px;height:1.200px;background:#a9a9a9"></div>
<!-- rotate / flip -->
<span class="pl" style="left:997.500px;top:405.500px">Rotate:</span>
<div class="btn" style="left:1039.500px;top:402.200px"></div>
<div class="btn" style="left:1069.500px;top:402.200px"></div>
<span class="pl" style="left:1124px;top:405.500px">Flip:</span>
<div class="btn" style="left:1151.200px;top:402.200px"></div>
<div class="btn" style="left:1180.500px;top:402.200px"></div>
<svg style="left:0;top:0" width="1280" height="720" viewBox="0 0 1280 720">
<defs><path id="rot" d="M-6.300 -5L-.2 -5L-1.800 -.5L-2.700 -1.500C-3.100 .2 -2.700 2.600 -1.300 5.100C-5.500 4.200 -7.400 .6 -5.700 -2.900z"/></defs>
<g transform="translate(1049.700 412.700)"><use href="#rot" fill="#0c0c0c"/><use href="#rot" fill="#3c3c3c" transform="rotate(180)"/></g>
<g transform="translate(1079.700 412.700) scale(-1 1)"><use href="#rot" fill="#0c0c0c"/><use href="#rot" fill="#3c3c3c" transform="rotate(180)"/></g>
<!-- flip H -->
<path d="M1160.600 410.800V420.300" stroke="#2c3c50" stroke-width="1" stroke-dasharray="1.300 1.300"/>
<path d="M1155.200 411.100L1159.300 414.800 1155.200 418.500z" fill="#e4eefa" stroke="#5a7a9a" stroke-width=".8"/><path d="M1167.600 410.800L1163 414.800 1167.600 418.800z" fill="#3a78b8"/>
<path d="M1155.600 410.600C1157.500 407.300 1161.500 406.600 1164.300 408.400" fill="none" stroke="#1e1e1e" stroke-width="1.200"/><path d="M1166.200 409.800L1162.600 409.700 1164.600 406.500z" fill="#1e1e1e"/>
<!-- flip V -->
<path d="M1184.300 412.300H1193.300" stroke="#2c3c50" stroke-width="1" stroke-dasharray="1.300 1.300"/>
<path d="M1184.900 406.700H1192.200L1188.500 410.400z" fill="#e4eefa" stroke="#5a7a9a" stroke-width=".8"/><path d="M1184.600 418.700H1192.600L1188.600 414.400z" fill="#5878b8"/>
<path d="M1192.300 407.200C1195.500 408.500 1196.600 411.500 1195.300 414.200" fill="none" stroke="#1e1e1e" stroke-width="1.200"/><path d="M1194.300 416.300L1193.600 412.800 1197 414.200z" fill="#1e1e1e"/>
</svg>
<!-- splitter horizontal -->
<div style="left:985.500px;top:455px;width:250.500px;height:6px;background:linear-gradient(#cfcfcf 0,#f4f4f4 1.500px,#efefef 4.500px,#dcdcdc 6px)"></div>
<div style="left:1104px;top:456.500px;width:11px;height:1px;background:#a8a8a8"></div>
<div style="left:1104px;top:458.500px;width:11px;height:1px;background:#a8a8a8"></div>

<!-- layers panel -->
<div style="left:984.400px;top:461px;width:251.600px;height:19px;background:linear-gradient(#d2e6fb 0,#cfe3fa 9px,#a7b8ee 10px,#aebff0 19px)"></div>
<span style="left:992px;top:464px;font-size:9.500px;line-height:13px;color:#1c2a55;white-space:nowrap;letter-spacing:.05px">LAYERS</span>
<div style="left:984.700px;top:480px;width:251.300px;height:23px;background:linear-gradient(#747474 0,#8a8a8a 1.500px,#8a8a8a 11px,#7e7e7e 12px,#7b7b7b 21px,#6c6c6c 23px)"></div>
<span class="dv" style="left:1048px;top:486px;font-size:9.050px;line-height:13px;color:#1a1a1a;white-space:nowrap">Layer Name</span>
<div id="lbody" style="left:985.500px;top:503px;width:237px;height:167.500px;background:#c1c1c1"></div>
<div style="left:985.500px;top:503px;width:46.500px;height:167.500px;background:#c6c6c6"></div>
<div style="left:1222.500px;top:503px;width:13.500px;height:161px;background:#fbfbfb"></div>
<div style="left:1226.500px;top:505px;width:6.500px;height:129.500px;border-radius:3.500px;background:#bfbfbf"></div>
<div style="left:985.500px;top:670.300px;width:237px;height:5.900px;background:#2e2e2e"></div>
<div style="left:985.500px;top:676.200px;width:250.500px;height:43.800px;background:linear-gradient(#e7e7e7 0,#e7e7e7 39px,#f0f0f0 42px,#f4f4f4)"></div>
<div style="left:1222.500px;top:664px;width:13.500px;height:13px;background:#e7e7e7"></div>
<div style="left:985.500px;top:503px;width:46.800px;height:27.88px;border-top:2.200px solid #ececec;border-bottom:1px solid #a6a6a6"></div>
<div style="left:1034.300px;top:529.28px;width:188.200px;height:1.600px;background:#949494"></div>
<div style="left:1019.300px;top:506px;width:8.600px;height:22px;background:linear-gradient(#72bb3a,#86c94c);border:1.300px solid #2f6a1f;border-radius:1.500px"></div>
<div style="left:1037.2px;top:506.3px;width:22.500px;height:22px;background:#fff;border:1px solid #9c9c9c"></div>
<span class="dv lt" style="left:1095.600px;top:511.1px;letter-spacing:-.2px">&lt;group&gt;</span>
<div style="left:985.500px;top:530.88px;width:46.800px;height:27.88px;border-top:2.200px solid #ececec;border-bottom:1px solid #a6a6a6"></div>
<div style="left:1034.300px;top:557.16px;width:188.200px;height:1.600px;background:#949494"></div>
<div style="left:1019.300px;top:533.88px;width:8.600px;height:22px;background:linear-gradient(#72bb3a,#86c94c);border:1.300px solid #2f6a1f;border-radius:1.500px"></div>
<div style="left:1051.3px;top:534.18px;width:22.500px;height:22px;background:#fff;border:1px solid #9c9c9c"></div>
<div style="left:985.500px;top:558.76px;width:46.800px;height:27.88px;border-top:2.200px solid #ececec;border-bottom:1px solid #a6a6a6"></div>
<div style="left:1034.300px;top:585.04px;width:188.200px;height:1.600px;background:#949494"></div>
<div style="left:1019.300px;top:561.76px;width:8.600px;height:22px;background:linear-gradient(#72bb3a,#86c94c);border:1.300px solid #2f6a1f;border-radius:1.500px"></div>
<div style="left:1051.3px;top:562.06px;width:22.500px;height:22px;background:#fff;border:1px solid #9c9c9c"></div>
<div style="left:985.500px;top:586.64px;width:46.800px;height:27.88px;border-top:2.200px solid #ececec;border-bottom:1px solid #a6a6a6"></div>
<div style="left:1034.300px;top:612.92px;width:188.200px;height:1.600px;background:#949494"></div>
<div style="left:1019.300px;top:589.64px;width:8.600px;height:22px;background:#186647;border:1.300px solid #0f4a33;border-radius:1.500px"></div>
<div style="left:1037.2px;top:589.94px;width:22.500px;height:22px;background:#fff;border:1px solid #9c9c9c"></div>
<span class="dv lt" style="left:1095.600px;top:594.74px;letter-spacing:-.2px">Leaf 3</span>
<div style="left:985.500px;top:614.52px;width:46.800px;height:27.88px;border-top:2.200px solid #ececec;border-bottom:1px solid #a6a6a6"></div>
<div style="left:1034.300px;top:640.8px;width:188.200px;height:1.600px;background:#949494"></div>
<div style="left:1019.300px;top:617.52px;width:8.600px;height:22px;background:#186647;border:1.300px solid #0f4a33;border-radius:1.500px"></div>
<div style="left:1051.3px;top:617.82px;width:22.500px;height:22px;background:#fff;border:1px solid #9c9c9c"></div>
<span class="dv lt" style="left:1108.800px;top:622.62px;letter-spacing:.03px">_x3C_group_x3E__4_</span>
<div style="left:985.500px;top:642.4px;width:46.800px;height:27.88px;border-top:2.200px solid #ececec;border-bottom:1px solid #a6a6a6"></div>
<div style="left:1034.300px;top:668.68px;width:188.200px;height:1.600px;background:#949494"></div>
<div style="left:1019.300px;top:645.4px;width:8.600px;height:22px;background:#186647;border:1.300px solid #0f4a33;border-radius:1.500px"></div>
<div style="left:1051.3px;top:645.7px;width:22.500px;height:22px;background:#fff;border:1px solid #9c9c9c"></div>
<div style="left:1032.300px;top:503px;width:2px;height:167.500px;background:#111"></div>
<div style="left:984.200px;top:503px;width:1.400px;height:167.500px;background:#8f8f8f"></div>
<svg style="left:0;top:0" width="1280" height="720" viewBox="0 0 1280 720"><g transform="translate(989 517.6)"><path d="M0 0C2 -2.900 4.500 -3.600 6.400 -3.600C8.300 -3.600 10.800 -2.900 12.800 0C10.800 2.900 8.300 3.600 6.400 3.600C4.500 3.600 2 2.900 0 0z" fill="#e6f1f6" stroke="#2d6f86" stroke-width="1.100"/><circle cx="6.400" cy="0" r="3" fill="#3f93ad"/><circle cx="6.400" cy="0" r="1.500" fill="#0e2a36"/><path d="M1.800 -1.700C4 -3.400 8.800 -3.400 11 -1.700" fill="none" stroke="#1d5a70" stroke-width="1.100"/></g>
<circle cx="1009.400" cy="517" r=".9" fill="#111"/>
<g transform="translate(1048.45 517.3)"><g fill="#d8142a"><circle cx="5.6" cy="0" r="3.500"/><circle cx="2.8" cy="4.85" r="3.500"/><circle cx="-2.8" cy="4.85" r="3.500"/><circle cx="-5.6" cy="-0" r="3.500"/><circle cx="-2.8" cy="-4.85" r="3.500"/><circle cx="2.8" cy="-4.85" r="3.500"/><circle r="5"/></g><circle r="2.600" fill="#f6e25a"/></g>
<path d="M1067.300 514.3H1074.300L1070.800 520.5z" fill="#6b6b6b"/>
<g transform="translate(1077 509.8)"><path d="M.6 12.500V3.500C.6 2.800 1 2.300 1.700 2.300H3L4.300 .6H8.200L9.300 2.300H12.500C13.200 2.300 13.600 2.800 13.600 3.500V12.500C13.600 13 13.200 13.400 12.700 13.400H1.500C1 13.400 .6 13 .6 12.500z" fill="#e9dc7e" stroke="#6b5a1a" stroke-width="1"/><path d="M.6 12.500L2.600 6.300C2.800 5.700 3.200 5.400 3.800 5.400H14.300L12.900 12.600C12.800 13.100 12.500 13.400 12 13.400H1.500z" fill="#f5eeb0" stroke="#6b5a1a" stroke-width=".9"/><ellipse cx="8" cy="9.600" rx="2.600" ry="1.700" fill="none" stroke="#7a5a0a" stroke-width="1.100"/><path d="M9.500 9.300L11.300 7.600" stroke="#7a5a0a" stroke-width="1"/></g>
<g transform="translate(989 545.48)"><path d="M0 0C2 -2.900 4.500 -3.600 6.400 -3.600C8.300 -3.600 10.800 -2.900 12.800 0C10.800 2.900 8.300 3.600 6.400 3.600C4.500 3.600 2 2.900 0 0z" fill="#e6f1f6" stroke="#2d6f86" stroke-width="1.100"/><circle cx="6.400" cy="0" r="3" fill="#3f93ad"/><circle cx="6.400" cy="0" r="1.500" fill="#0e2a36"/><path d="M1.800 -1.700C4 -3.400 8.800 -3.400 11 -1.700" fill="none" stroke="#1d5a70" stroke-width="1.100"/></g>
<circle cx="1009.400" cy="544.88" r=".9" fill="#111"/>
<circle cx="1062.55" cy="545.18" r="9.300" fill="#f6f45e" stroke="#e2dc6a" stroke-width=".8"/>
<g transform="translate(1091.2 539.68)"><path d="M1.500 .5H12C13 .5 13.500 1 13.500 2V7L9.500 11H1.500C.8 11 .5 10.500 .5 10V1.500C.5 1 .8 .5 1.500 .5z" fill="#f7f5c8" stroke="#4a4a3a" stroke-width="1"/><path d="M13.500 7H10.500C9.800 7 9.500 7.400 9.500 8V11z" fill="#d9d6a0" stroke="#4a4a3a" stroke-width=".9" stroke-linejoin="round"/><path d="M1.500 1.500H10L3 9H1.500z" fill="#fffef0" opacity=".8"/></g>
<g transform="translate(989 573.36)"><path d="M0 0C2 -2.900 4.500 -3.600 6.400 -3.600C8.300 -3.600 10.800 -2.900 12.800 0C10.800 2.900 8.300 3.600 6.400 3.600C4.500 3.600 2 2.900 0 0z" fill="#e6f1f6" stroke="#2d6f86" stroke-width="1.100"/><circle cx="6.400" cy="0" r="3" fill="#3f93ad"/><circle cx="6.400" cy="0" r="1.500" fill="#0e2a36"/><path d="M1.800 -1.700C4 -3.400 8.800 -3.400 11 -1.700" fill="none" stroke="#1d5a70" stroke-width="1.100"/></g>
<circle cx="1009.400" cy="572.76" r=".9" fill="#111"/>
<g transform="translate(1062.55 573.06)" fill="#e8102a"><circle cx="5.4" cy="0" r="3.800"/><circle cx="2.7" cy="4.68" r="3.800"/><circle cx="-2.7" cy="4.68" r="3.800"/><circle cx="-5.4" cy="-0" r="3.800"/><circle cx="-2.7" cy="-4.68" r="3.800"/><circle cx="2.7" cy="-4.68" r="3.800"/><circle r="5"/></g>
<g transform="translate(1091.2 567.56)"><path d="M1.500 .5H12C13 .5 13.500 1 13.500 2V7L9.500 11H1.500C.8 11 .5 10.500 .5 10V1.500C.5 1 .8 .5 1.500 .5z" fill="#f7f5c8" stroke="#4a4a3a" stroke-width="1"/><path d="M13.500 7H10.500C9.800 7 9.500 7.400 9.500 8V11z" fill="#d9d6a0" stroke="#4a4a3a" stroke-width=".9" stroke-linejoin="round"/><path d="M1.500 1.500H10L3 9H1.500z" fill="#fffef0" opacity=".8"/></g>
<g transform="translate(989 601.24)"><path d="M0 0C2 -2.900 4.500 -3.600 6.400 -3.600C8.300 -3.600 10.800 -2.900 12.800 0C10.800 2.900 8.300 3.600 6.400 3.600C4.500 3.600 2 2.900 0 0z" fill="#e6f1f6" stroke="#2d6f86" stroke-width="1.100"/><circle cx="6.400" cy="0" r="3" fill="#3f93ad"/><circle cx="6.400" cy="0" r="1.500" fill="#0e2a36"/><path d="M1.800 -1.700C4 -3.400 8.800 -3.400 11 -1.700" fill="none" stroke="#1d5a70" stroke-width="1.100"/></g>
<circle cx="1009.400" cy="600.64" r=".9" fill="#111"/>
<g transform="translate(1048.45 600.94)"><path d="M-9 -.3H-4" stroke="#5cb83a" stroke-width="1.200"/><path d="M-5.500 .2C-5.500 -3.500 -2.500 -5.800 .5 -5.500C3.500 -5 6 -1.500 9.300 0C6 1.500 3.500 5 .5 5.500C-2.500 5.800 -5.500 3.500 -5.500 .2z" fill="#58b432"/></g>
<path d="M1067.300 597.94H1074.300L1070.800 604.14z" fill="#6b6b6b"/>
<g transform="translate(1077 593.44)"><path d="M.6 12.500V3.500C.6 2.800 1 2.300 1.700 2.300H3L4.300 .6H8.200L9.300 2.300H12.500C13.200 2.300 13.600 2.800 13.600 3.500V12.500C13.600 13 13.200 13.400 12.700 13.400H1.500C1 13.400 .6 13 .6 12.500z" fill="#e9dc7e" stroke="#6b5a1a" stroke-width="1"/><path d="M.6 12.500L2.600 6.300C2.800 5.700 3.200 5.400 3.800 5.400H14.300L12.900 12.600C12.800 13.100 12.500 13.400 12 13.400H1.500z" fill="#f5eeb0" stroke="#6b5a1a" stroke-width=".9"/><ellipse cx="8" cy="9.600" rx="2.600" ry="1.700" fill="none" stroke="#7a5a0a" stroke-width="1.100"/><path d="M9.500 9.300L11.300 7.600" stroke="#7a5a0a" stroke-width="1"/></g>
<g transform="translate(989 629.12)"><path d="M0 0C2 -2.900 4.500 -3.600 6.400 -3.600C8.300 -3.600 10.800 -2.900 12.800 0C10.800 2.900 8.300 3.600 6.400 3.600C4.500 3.600 2 2.900 0 0z" fill="#e6f1f6" stroke="#2d6f86" stroke-width="1.100"/><circle cx="6.400" cy="0" r="3" fill="#3f93ad"/><circle cx="6.400" cy="0" r="1.500" fill="#0e2a36"/><path d="M1.800 -1.700C4 -3.400 8.800 -3.400 11 -1.700" fill="none" stroke="#1d5a70" stroke-width="1.100"/></g>
<circle cx="1009.400" cy="628.52" r=".9" fill="#111"/>
<g transform="translate(1062.55 628.82)" stroke="#8a5848" stroke-width="1.400" stroke-linecap="round" fill="none"><path d="M-8.500 .6C-3 .3 3 .2 9 -.8" stroke="#5e3c2c" stroke-width="1.500"/><path d="M-7.500 -3.200L-4.500 -7M-2.500 -2.800L1.800 -7.600M3.200 -2.800L6.800 -5.800"/><path d="M-7.500 3.800L-4.500 7.300M-3 3.200L1.800 7.400M3 2.600L7.200 5.600"/></g>
<path d="M1081.500 625.22V632.42L1087.500 628.82z" fill="#6b6b6b"/>
<g transform="translate(1090.5 621.82)"><path d="M.6 11.800V2.800C.6 2.200 1 1.800 1.600 1.800H5.500L6.500 3H12.600C13.200 3 13.600 3.400 13.600 4V11.800C13.600 12.400 13.200 12.800 12.600 12.800H1.600C1 12.800 .6 12.400 .6 11.800z" fill="#f0e79a" stroke="#6b5a1a" stroke-width="1"/></g>
<text x="1097.800" y="632.42" font-family="Liberation Sans, sans-serif" font-weight="bold" font-size="8.500" text-anchor="middle" fill="#5a4a0a">G</text>
<g transform="translate(989 657)"><path d="M0 0C2 -2.900 4.500 -3.600 6.400 -3.600C8.300 -3.600 10.800 -2.900 12.800 0C10.800 2.900 8.300 3.600 6.400 3.600C4.500 3.600 2 2.900 0 0z" fill="#e6f1f6" stroke="#2d6f86" stroke-width="1.100"/><circle cx="6.400" cy="0" r="3" fill="#3f93ad"/><circle cx="6.400" cy="0" r="1.500" fill="#0e2a36"/><path d="M1.800 -1.700C4 -3.400 8.800 -3.400 11 -1.700" fill="none" stroke="#1d5a70" stroke-width="1.100"/></g>
<circle cx="1009.400" cy="656.4" r=".9" fill="#111"/>
<g transform="translate(1062.55 656.7)"><path d="M-9 -.3H-4" stroke="#5cb83a" stroke-width="1.200"/><path d="M-5.500 .2C-5.500 -3.500 -2.500 -5.800 .5 -5.500C3.500 -5 6 -1.500 9.300 0C6 1.500 3.500 5 .5 5.500C-2.500 5.800 -5.500 3.500 -5.500 .2z" fill="#58b432"/></g>
<g transform="translate(1091.2 651.2)"><path d="M1.500 .5H12C13 .5 13.500 1 13.500 2V7L9.500 11H1.500C.8 11 .5 10.500 .5 10V1.500C.5 1 .8 .5 1.500 .5z" fill="#f7f5c8" stroke="#4a4a3a" stroke-width="1"/><path d="M13.500 7H10.500C9.800 7 9.500 7.400 9.500 8V11z" fill="#d9d6a0" stroke="#4a4a3a" stroke-width=".9" stroke-linejoin="round"/><path d="M1.500 1.500H10L3 9H1.500z" fill="#fffef0" opacity=".8"/></g>
<!-- header eye + lock -->
<g transform="translate(985.800 492)"><path d="M0 0C2 -3.200 4.200 -4 6.200 -4C8.200 -4 10.400 -3.200 12.400 0C10.400 3.200 8.200 4 6.200 4C4.200 4 2 3.200 0 0z" fill="#eaf4f8" stroke="#2d6f86" stroke-width="1.100"/><circle cx="6.200" cy="0" r="3.300" fill="#3f93ad"/><circle cx="6.200" cy="0" r="1.600" fill="#0e2a36"/><path d="M1.800 -1.800C4 -3.800 8.500 -3.800 10.600 -1.800" fill="none" stroke="#1d5a70" stroke-width="1.200"/></g>
<path d="M1003.300 490V487.500C1003.300 484.300 1008.300 484.300 1008.300 487.500V488.500" fill="none" stroke="#3a3a3a" stroke-width="1.300"/>
<rect x="1001.300" y="489.600" width="9" height="7.600" rx="1" fill="#e0b84a" stroke="#5a4210" stroke-width="1"/>
<path d="M1005.800 492V495" stroke="#3a2a08" stroke-width="1.400" stroke-linecap="round"/>
<!-- header menu -->
<path d="M1203 490.500H1205.600L1204.300 492.300z" fill="#444"/><path d="M1207 489.500H1216.500M1207 491.700H1216.500M1207 493.900H1216.500M1207 496.100H1216.500" stroke="#555" stroke-width="1.100"/>
<!-- footer: new folder -->
<path d="M1003.300 702.300V693.600C1003.300 693 1003.700 692.600 1004.300 692.600H1008L1009 694H1014C1014.600 694 1015 694.400 1015 695V702.300C1015 702.900 1014.600 703.300 1014 703.300H1004.300C1003.700 703.300 1003.300 702.900 1003.300 702.300z" fill="#f0ecb4" stroke="#8a8250" stroke-width=".9"/>
<path d="M1000.400 697.300H1006M1003.200 694.600V700" stroke="#2a2a2a" stroke-width="1.500"/>
<!-- footer: trash -->
<path d="M1038.200 694.500H1047.400L1046.600 703H1039z" fill="#6aa0d8" stroke="#2f5f9a" stroke-width=".9"/>
<path d="M1037 693.600H1048.600M1040.600 692.300H1045" stroke="#2f5f9a" stroke-width="1.300" stroke-linecap="round"/>
<path d="M1041 696V701.500M1042.800 696V701.500M1044.600 696V701.500" stroke="#c8dcf2" stroke-width=".8"/>
<!-- mouse cursor -->
<path d="M994.900 547V557.600L997.300 555.400 999.100 559.300 1000.800 558.500 999.100 554.700 1002.400 554.500z" fill="#0a0a0a" stroke="#f4f4f4" stroke-width=".9" stroke-linejoin="round"/>

</svg>

<!-- side tab strip -->
<div style="left:1235.300px;top:127px;width:39.500px;height:593px;background:#b5ae97;border-left:1px solid #a9a28b"></div>
<div style="left:1235.300px;top:454.500px;width:39.500px;height:4.200px;background:linear-gradient(#c4bea8,#d4cfbc 50%,#bdb7a0);border-bottom:.8px solid #99927c"></div>
<div style="left:1274.500px;top:20px;width:1.500px;height:700px;background:#8d8d8d"></div>
<div style="left:1276px;top:20px;width:4px;height:700px;background:#cfcfcf"></div>
<div style="left:1276px;top:113px;width:4px;height:24px;background:#3a3f4a"></div>
<div id="edgewhite" style="left:1276px;top:252px;width:4px;height:48px;background:#f4f4f4"></div>
<div style="left:1276.500px;top:280px;width:3.500px;height:5px;background:#6a6a6a;border-radius:2px 0 0 2px"></div>
<div style="left:1235.300px;top:186px;width:31.500px;height:31.500px;border-radius:0 4px 4px 0;background:#e8e6db"></div>
<div style="left:1235.300px;top:481.300px;width:31.200px;height:31.500px;border-radius:0 4px 4px 0;background:#e8e6db"></div>
<svg style="left:0;top:0" width="1280" height="720" viewBox="0 0 1280 720">
<defs>
<linearGradient id="pgg" x1="0" y1="0" x2="0" y2="1"><stop offset="0" stop-color="#fff"/><stop offset="1" stop-color="#e4e4e4"/></linearGradient>
<radialGradient id="hg" cx=".45" cy=".3" r=".75"><stop offset="0" stop-color="#f7c04a"/><stop offset=".6" stop-color="#e39a12"/><stop offset="1" stop-color="#a8690a"/></radialGradient>
<linearGradient id="wg" x1="0" y1="0" x2="1" y2="1"><stop offset="0" stop-color="#e2e2e2"/><stop offset="1" stop-color="#7c7c7c"/></linearGradient>
</defs>
<!-- page icon -->
<path d="M1243 153H1256.500L1262 158.500V177H1243z" fill="#6d6a5c" opacity=".55"/>
<path d="M1241.800 151.600H1255.300L1260.800 157.100V175.600H1241.800z" fill="url(#pgg)" stroke="#a9a79c" stroke-width=".7"/>
<path d="M1255.300 151.600V157.100H1260.800z" fill="#d6d6d6" stroke="#a9a79c" stroke-width=".6"/>
<!-- move icon -->
<g fill="#121212"><rect x="1249.300" y="191" width="3" height="19"/><rect x="1241.500" y="199" width="19" height="3"/><path d="M1250.800 187.600L1255.800 193.200H1245.800zM1250.800 213.400L1255.800 207.800H1245.800zM1238.200 200.500L1243.800 195.500V205.500zM1263.400 200.500L1257.800 195.500V205.500z"/></g>
<!-- palette -->
<path d="M1238.500 233C1239.500 226.500 1247 223.500 1254 225C1260.500 226.500 1264.500 232 1263.500 237.500C1262.800 240.500 1260 240.500 1258.500 239.800C1256.500 239 1255 240 1255.500 242.500C1256.300 246 1254 248 1250.500 247.800C1243 247.300 1237.500 240.500 1238.500 233z" fill="#f3dfb4" stroke="#8a5a2a" stroke-width="1.300"/>
<circle cx="1243.300" cy="233.500" r="2" fill="#c8402a"/><circle cx="1247.800" cy="228.800" r="2" fill="#d8602a"/><circle cx="1254" cy="229.300" r="2" fill="#e8d23a"/><circle cx="1258.800" cy="233.300" r="2" fill="#7ab83a"/><circle cx="1245.800" cy="239.500" r="2" fill="#5a9ac8"/><ellipse cx="1251.300" cy="243" rx="2.300" ry="1.600" fill="#8a5a2a"/>
<!-- wrench -->
<path d="M1241.300 284.800L1254.500 271.600" stroke="#6a6a6a" stroke-width="5" stroke-linecap="round"/>
<path d="M1241.300 284.800L1254.500 271.600" stroke="url(#wg)" stroke-width="3.400" stroke-linecap="round"/>
<path d="M1252.800 273.200C1250.800 269.500 1252.500 264.800 1257 263.300C1258.800 262.800 1260.500 263 1261.300 263.500L1257.300 267.500 1258.300 270.300 1261.300 270.800 1264.500 267C1265.200 269.500 1264.500 272.500 1262.300 274.300C1259.500 276.500 1255.500 276 1252.800 273.200z" fill="#c4c4c4" stroke="#5e5e5e" stroke-width="1"/>
<!-- AA -->
<rect x="1238.600" y="299.300" width="26.200" height="24" rx="3" fill="#77735f" opacity=".6"/>
<rect x="1238" y="298.200" width="26.200" height="24" rx="3" fill="#fdfdfd" stroke="#cfcdc4" stroke-width=".6"/>
<path d="M1240.500 307.300L1243.600 302.800 1246.700 307.300z" fill="#222"/>
<text x="1239.800" y="319.300" font-family="Liberation Sans, sans-serif" font-size="11" fill="#111">A</text>
<text x="1247.600" y="319.300" font-family="Liberation Sans, sans-serif" font-size="19.500" fill="#111">A</text>
<!-- layers icon -->
<g fill="#fff" stroke="#1e1e1e" stroke-width="1.100" stroke-linejoin="round"><path d="M1238.500 498.800L1251 492.500 1263.500 498.800 1251 505.800z"/><path d="M1238.500 495.300L1251 489 1263.500 495.300 1251 502.300z"/><path d="M1238.500 491.800L1251 485.500 1263.500 491.800 1251 498.800z"/></g>
<!-- help -->
<circle cx="1251.300" cy="534" r="12" fill="#6a5a2a" opacity=".45"/>
<circle cx="1250.800" cy="532.900" r="12" fill="url(#hg)" stroke="#9a6208" stroke-width=".8"/>
<text x="1250.900" y="540.200" font-family="Liberation Sans, sans-serif" font-weight="bold" font-size="20" text-anchor="middle" fill="#fff6d8">?</text>
</svg>

</div>
</body></html>
